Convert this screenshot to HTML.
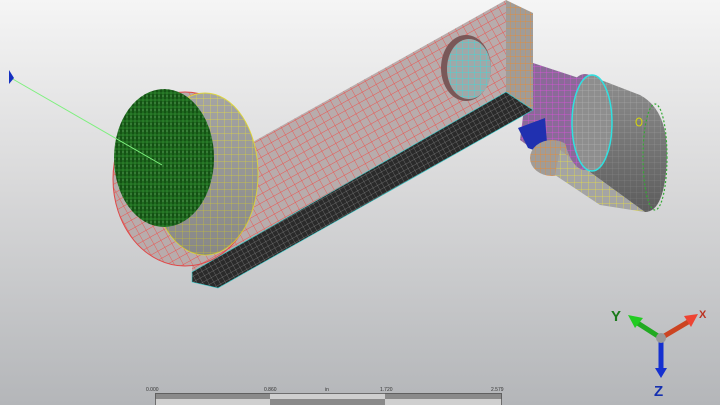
<!DOCTYPE html>
<html><head><meta charset="utf-8"><style>
html,body{margin:0;padding:0;width:720px;height:405px;overflow:hidden}
body{background:linear-gradient(#f5f5f5 0%,#d9d9da 45%,#b4b6b9 100%);font-family:"Liberation Sans",sans-serif}
svg{position:absolute;left:0;top:0}
</style></head><body>
<svg width="720" height="405" viewBox="0 0 720 405">
<defs>
<pattern id="pk" width="8" height="8" patternUnits="userSpaceOnUse" patternTransform="rotate(-29)">
<rect width="8" height="8" fill="#b8acac"/><path d="M0 0H8M0 0V8" stroke="#ec5450" stroke-width="0.9"/></pattern>
<pattern id="bk" width="5" height="5" patternUnits="userSpaceOnUse" patternTransform="rotate(-29)">
<rect width="5" height="5" fill="#2a2a2a"/><path d="M0 0H5M0 0V5" stroke="#9a9a9a" stroke-width="0.5"/></pattern>
<pattern id="or" width="5" height="7" patternUnits="userSpaceOnUse">
<rect width="5" height="7" fill="#a09c98"/><path d="M0 0H5M0 0V7" stroke="#f08a2a" stroke-width="0.7"/></pattern>
<pattern id="ye" width="7" height="7" patternUnits="userSpaceOnUse">
<rect width="7" height="7" fill="#a4a4a4"/><path d="M0 0H7M0 0V7" stroke="#e8e040" stroke-width="0.7"/></pattern>
<pattern id="gy" width="6" height="6" patternUnits="userSpaceOnUse">
<rect width="6" height="6" fill="#8e8e8e"/><path d="M0 0H6M0 0V6" stroke="#bcbcbc" stroke-width="0.5"/></pattern>
<pattern id="cy" width="6" height="6" patternUnits="userSpaceOnUse">
<rect width="6" height="6" fill="#a0a8a8"/><path d="M0 0H6M0 0V6" stroke="#30e0e0" stroke-width="0.7"/></pattern>
<pattern id="mg" width="6" height="6" patternUnits="userSpaceOnUse">
<rect width="6" height="6" fill="#8a6a98"/><path d="M0 0H6M0 0V6" stroke="#e050e0" stroke-width="0.7"/></pattern>
<pattern id="gr" width="4" height="7" patternUnits="userSpaceOnUse">
<rect width="4" height="7" fill="#1f6a1f"/><path d="M1 0V7" stroke="#0a3a0a" stroke-width="1"/><path d="M0 2H4" stroke="#3aa03a" stroke-width="0.6"/><circle cx="3" cy="5" r="0.5" fill="#9c9"/></pattern>
<linearGradient id="sh" x1="0" y1="0" x2="0" y2="1"><stop offset="0" stop-color="#000" stop-opacity="0"/><stop offset="1" stop-color="#000" stop-opacity="0.35"/></linearGradient>
</defs>
<!-- right part -->
<polygon points="530,62 585,80 590,165 548,160 520,140" fill="url(#mg)"/>
<polygon points="518,128 545,118 548,155 528,148" fill="#2030b0"/>
<ellipse cx="552" cy="158" rx="22" ry="18" fill="url(#or)"/>
<path d="M588,75 L640,95 Q668,110 667,157 Q665,212 645,212 L590,172 Z" fill="url(#gy)"/>
<path d="M560,150 L590,172 L645,212 L600,205 L555,175 Z" fill="url(#ye)"/>
<path d="M588,75 L640,95 Q668,110 667,157 Q665,212 645,212 L590,172 Z" fill="url(#sh)"/>
<ellipse cx="585" cy="122" rx="22" ry="48" fill="url(#mg)"/>
<ellipse cx="592" cy="123" rx="20" ry="48" fill="url(#gy)" stroke="#30e0e0" stroke-width="1.5"/>
<ellipse cx="655" cy="157" rx="12" ry="53" fill="none" stroke="#3a3" stroke-width="1.2" stroke-dasharray="2 2"/>
<ellipse cx="639" cy="122" rx="3" ry="4" fill="none" stroke="#dd0" stroke-width="1"/>
<!-- bar -->
<polygon points="192,176 506,0 506,92 192,272" fill="url(#pk)"/>
<polygon points="506,0 533,13 533,110 506,92" fill="url(#or)"/>
<polygon points="192,272 506,92 533,110 218,288 192,282" fill="url(#bk)" stroke="#3cc" stroke-width="0.6"/>
<ellipse cx="466" cy="68" rx="25" ry="33" fill="#7a5858"/>
<ellipse cx="469" cy="69" rx="22" ry="30" fill="url(#cy)"/>
<!-- left disk -->
<ellipse cx="185" cy="179" rx="72" ry="87" fill="url(#pk)" stroke="#e04848" stroke-width="1"/>
<ellipse cx="205" cy="174" rx="53" ry="81" fill="url(#ye)" stroke="#e0d840" stroke-width="1"/>
<ellipse cx="205" cy="174" rx="53" ry="81" fill="url(#sh)" opacity="0.5"/>
<ellipse cx="164" cy="158" rx="50" ry="69" fill="url(#gr)"/>
<line x1="11" y1="78" x2="162" y2="165" stroke="#7ef07e" stroke-width="1"/>
<path d="M9 70 L14 78 L9 84Z" fill="#1530c0"/>
<!-- triad -->
<line x1="661" y1="338" x2="636" y2="322" stroke="#2a2" stroke-width="5"/>
<path d="M628 315 L643 318 L635 328Z" fill="#2c2"/>
<line x1="661" y1="338" x2="688" y2="322" stroke="#c42" stroke-width="5"/>
<path d="M698 314 L684 316 L691 327Z" fill="#e43"/>
<line x1="661" y1="338" x2="661" y2="368" stroke="#1530d0" stroke-width="5"/>
<path d="M655 368 L667 368 L661 378Z" fill="#1530d0"/>
<circle cx="661" cy="338" r="5" fill="#999"/>
<text x="611" y="321" font-size="15" font-weight="bold" fill="#1a7a1a">Y</text>
<text x="699" y="318" font-size="11" font-weight="bold" fill="#b32">X</text>
<text x="654" y="396" font-size="15" font-weight="bold" fill="#1530b0">Z</text>
<!-- scale -->
<g font-size="5" fill="#333">
<text x="146" y="391">0.000</text><text x="264" y="391">0.860</text><text x="325" y="391">in</text><text x="380" y="391">1.720</text><text x="491" y="391">2.579</text></g>
<rect x="155" y="393" width="115" height="6" fill="#8a8a8a"/><rect x="270" y="393" width="115" height="6" fill="#cfcfcf"/><rect x="385" y="393" width="117" height="6" fill="#8a8a8a"/>
<rect x="155" y="399" width="115" height="6" fill="#cfcfcf"/><rect x="270" y="399" width="115" height="6" fill="#8a8a8a"/><rect x="385" y="399" width="117" height="6" fill="#cfcfcf"/>
<rect x="155.5" y="393.5" width="346" height="12" fill="none" stroke="#555" stroke-width="0.8"/>
</svg>
</body></html>
